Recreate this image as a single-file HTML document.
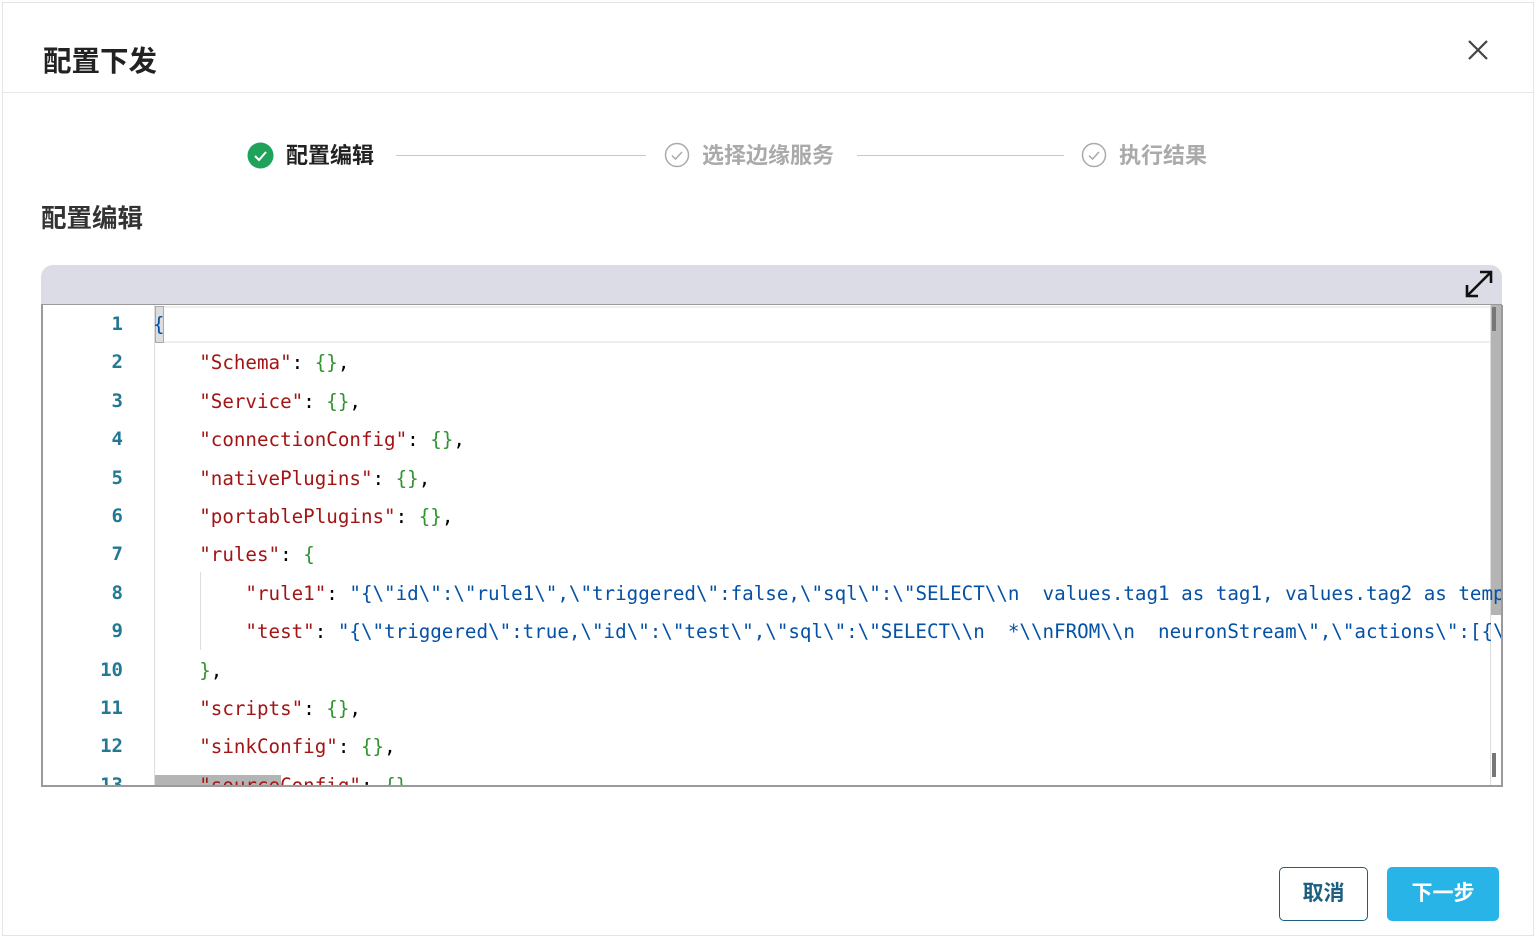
<!DOCTYPE html>
<html><head><meta charset="utf-8"><style>
*{margin:0;padding:0;box-sizing:border-box}
body{width:1536px;height:938px;background:#fff;position:relative;overflow:hidden;font-family:"Liberation Sans","Noto Sans CJK SC",sans-serif}
.modal{position:absolute;left:2px;top:2px;width:1532px;height:934px;border:1px solid #e4e4e4;background:#fff}
.abs{position:absolute}
.title{left:40px;top:40px;font-size:28.5px;font-weight:bold;color:#222;line-height:38px}
.hdr{left:0;top:89px;width:1530px;height:1px;background:#e8e8e8}
.step{font-size:22px;font-weight:bold;top:141px;line-height:30px}
.line{height:1px;background:#c8c8c8;top:155px}
.code{font-family:"DejaVu Sans Mono","Liberation Mono",monospace;font-size:19.2px;white-space:pre;line-height:38.4px}
.k{color:#a31515}.s{color:#0451a5}.b{color:#319331}.p{color:#000}
.ln{color:#237893;text-align:right;width:80px;left:0;font-family:"DejaVu Sans Mono",monospace;font-size:19px;line-height:38.4px}
</style></head><body>
<div class="modal">
<div class="abs title">配置下发</div>
<svg class="abs" style="left:1463px;top:35px" width="24" height="24" viewBox="0 0 24 24"><path d="M3 3L21 21M21 3L3 21" stroke="#444" stroke-width="2.2" fill="none"/></svg>
<div class="abs hdr"></div>
</div>
<svg class="abs" style="left:247px;top:142px" width="27" height="27" viewBox="0 0 27 27"><circle cx="13.5" cy="13.5" r="13" fill="#1fa35b"/><path d="M8 14l4 4 7-8" stroke="#fff" stroke-width="2" fill="none"/></svg>
<div class="abs step" style="left:286px;color:#222">配置编辑</div>
<div class="abs line" style="left:396px;width:250px"></div>
<svg class="abs" style="left:664px;top:142px" width="26" height="26" viewBox="0 0 26 26"><circle cx="13" cy="13" r="11.5" fill="none" stroke="#aaa" stroke-width="1.5"/><path d="M8 13.5l3.5 3.5 6.5-7" stroke="#aaa" stroke-width="1.5" fill="none"/></svg>
<div class="abs step" style="left:702px;color:#aaa">选择边缘服务</div>
<div class="abs line" style="left:857px;width:207px"></div>
<svg class="abs" style="left:1081px;top:142px" width="26" height="26" viewBox="0 0 26 26"><circle cx="13" cy="13" r="11.5" fill="none" stroke="#aaa" stroke-width="1.5"/><path d="M8 13.5l3.5 3.5 6.5-7" stroke="#aaa" stroke-width="1.5" fill="none"/></svg>
<div class="abs step" style="left:1119px;color:#aaa">执行结果</div>
<div class="abs" style="left:41px;top:203px;font-size:25.5px;font-weight:bold;color:#333;line-height:32px">配置编辑</div>
<div class="abs" style="left:41px;top:265px;width:1461px;height:41px;background:#dcdce6;border-radius:12px 12px 0 0;border-bottom:2px solid #9a9a9a"></div>
<svg class="abs" style="left:1463px;top:268px" width="32" height="32" viewBox="0 0 32 32"><path d="M4 28L28 4M17 4H28V15M4 17V28H15" stroke="#111" stroke-width="2.6" fill="none"/></svg>
<div class="abs" style="left:41px;top:305px;width:1462px;height:482px;border:2px solid #9a9a9a;border-top:none;overflow:hidden;background:#fff">
<div class="abs" style="left:111px;top:0;width:1px;height:480px;background:#ddd"></div>
<div class="abs" style="left:112px;top:1px;width:1348px;height:37px;border-top:2px solid #eee;border-bottom:2px solid #eee"></div>
<div class="abs" style="left:112px;top:1px;width:9px;height:37px;background:#ddd;border:1px solid #aaa"></div>
<div class="abs" style="left:157px;top:267px;width:1px;height:78px;background:#ddd"></div>
<div class="abs" style="left:1447px;top:0;width:13px;background:#b4b4b4;height:310px"></div>
<div class="abs" style="left:1449px;top:2px;width:4px;height:24px;background:#777"></div>
<div class="abs" style="left:1449px;top:448px;width:4px;height:24px;background:#777"></div>
<div class="abs" style="left:1447px;top:0;width:1px;height:480px;background:#ddd"></div>
<div class="abs" style="left:112px;top:470px;width:126px;height:10px;background:#b4b4b4"></div>
<div class="abs ln" style="top:0;font-weight:bold">1<br>2<br>3<br>4<br>5<br>6<br>7<br>8<br>9<br>10<br>11<br>12<br>13</div>
<div class="abs code" style="left:110px;top:1px;width:1350px;overflow:hidden"><span class="s">{</span>
    <span class="k">"Schema"</span><span class="p">: </span><span class="b">{}</span><span class="p">,</span>
    <span class="k">"Service"</span><span class="p">: </span><span class="b">{}</span><span class="p">,</span>
    <span class="k">"connectionConfig"</span><span class="p">: </span><span class="b">{}</span><span class="p">,</span>
    <span class="k">"nativePlugins"</span><span class="p">: </span><span class="b">{}</span><span class="p">,</span>
    <span class="k">"portablePlugins"</span><span class="p">: </span><span class="b">{}</span><span class="p">,</span>
    <span class="k">"rules"</span><span class="p">: </span><span class="b">{</span>
        <span class="k">"rule1"</span><span class="p">: </span><span class="s">"{\"id\":\"rule1\",\"triggered\":false,\"sql\":\"SELECT\\n  values.tag1 as tag1, values.tag2 as temp</span>
        <span class="k">"test"</span><span class="p">: </span><span class="s">"{\"triggered\":true,\"id\":\"test\",\"sql\":\"SELECT\\n  *\\nFROM\\n  neuronStream\",\"actions\":[{\</span>
    <span class="b">}</span><span class="p">,</span>
    <span class="k">"scripts"</span><span class="p">: </span><span class="b">{}</span><span class="p">,</span>
    <span class="k">"sinkConfig"</span><span class="p">: </span><span class="b">{}</span><span class="p">,</span>
    <span class="k">"sourceConfig"</span><span class="p">: </span><span class="b">{}</span></div>
</div>
<div class="abs" style="left:1279px;top:867px;width:89px;height:54px;border:1.5px solid #1d5f80;border-radius:5px;color:#1d5f80;font-size:21px;font-weight:bold;text-align:center;line-height:51px">取消</div>
<div class="abs" style="left:1387px;top:867px;width:112px;height:54px;background:#29b4e8;border-radius:5px;color:#fff;font-size:21px;font-weight:bold;text-align:center;line-height:54px">下一步</div>
</body></html>
